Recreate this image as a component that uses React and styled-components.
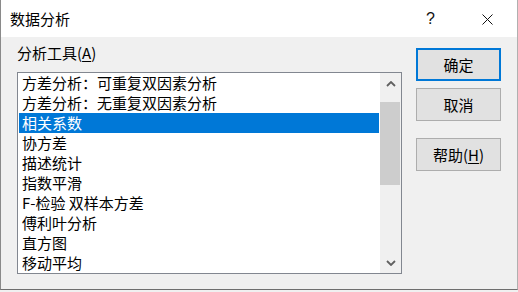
import React from 'react';
import styled, { createGlobalStyle } from 'styled-components';

const items = [
    '方差分析：可重复双因素分析',
    '方差分析：无重复双因素分析',
    '相关系数',
    '协方差',
    '描述统计',
    '指数平滑',
    'F-检验 双样本方差',
    '傅利叶分析',
    '直方图',
    '移动平均',
];

function DataAnalysis() {
    const selected = 2;

    return (
        <Window>
            <TitleBar>
                <Title>数据分析</Title>
                <CaptionButton>?</CaptionButton>
                <CaptionButton>
                    <svg width="11" height="11" viewBox="0 0 11 11">
                        <path d="M0.5 0.5 L10.5 10.5 M10.5 0.5 L0.5 10.5" stroke="#111" strokeWidth="1" fill="none" />
                    </svg>
                </CaptionButton>
            </TitleBar>
            <Body>
                <LeftColumn>
                    <Label>分析工具(<u>A</u>)</Label>
                    <ListBox>
                        <Rows>
                            {items.map((item, i) => (
                                <Row key={item} $selected={i === selected}>{item}</Row>
                            ))}
                        </Rows>
                        <ScrollBar>
                            <ArrowButton>
                                <svg width="10" height="6" viewBox="0 0 10 6">
                                    <path d="M1 5 L5 1 L9 5" stroke="#606060" strokeWidth="1.8" fill="none" />
                                </svg>
                            </ArrowButton>
                            <Track>
                                <Thumb />
                            </Track>
                            <ArrowButton>
                                <svg width="10" height="6" viewBox="0 0 10 6">
                                    <path d="M1 1 L5 5 L9 1" stroke="#606060" strokeWidth="1.8" fill="none" />
                                </svg>
                            </ArrowButton>
                        </ScrollBar>
                    </ListBox>
                </LeftColumn>
                <ButtonColumn>
                    <Button $default>确定</Button>
                    <Button>取消</Button>
                    <Button $spaced>帮助(<u>H</u>)</Button>
                </ButtonColumn>
            </Body>
        </Window>
    );
}

const GlobalStyle = createGlobalStyle`
    html, body {
        margin: 0;
        padding: 0;
        background: #f0f0f0;
    }
    body {
        font-family: "Noto Sans CJK SC", "Noto Sans", sans-serif;
        font-size: 15px;
        color: #000;
    }
    u {
        text-decoration-thickness: 1px;
        text-underline-offset: 2px;
    }
`;

const Window = styled.div`
    width: 518px;
    height: 290px;
    box-sizing: border-box;
    border-left: 1px solid #8a8a8a;
    border-right: 1px solid #b0b0b0;
    border-bottom: 1px solid #6e6e6e;
    background: #f0f0f0;
    display: flex;
    flex-direction: column;
`;

const TitleBar = styled.div`
    height: 37px;
    background: #fff;
    display: flex;
    align-items: center;
    padding-left: 9px;
    padding-right: 1px;
`;

const Title = styled.div`
    flex: 1;
    line-height: 20px;
    margin-top: 1px;
`;

const CaptionButton = styled.div`
    width: 57px;
    height: 37px;
    display: flex;
    align-items: center;
    justify-content: center;
    font-family: "Liberation Sans", sans-serif;
    font-size: 16px;
    color: #111;
    margin-top: 1px;
`;

const Body = styled.div`
    flex: 1;
    display: flex;
    align-items: flex-start;
    padding: 8px 0 0 16px;
    gap: 14px;
`;

const LeftColumn = styled.div`
    display: flex;
    flex-direction: column;
`;

const Label = styled.div`
    line-height: 16px;
    height: 16px;
    margin-bottom: 11px;
`;

const ListBox = styled.div`
    width: 385px;
    height: 202px;
    box-sizing: border-box;
    border: 1px solid #828790;
    background: #fff;
    display: flex;
`;

const Rows = styled.div`
    flex: 1;
    display: flex;
    flex-direction: column;
    padding: 0 1px;
`;

const Row = styled.div`
    height: 20px;
    line-height: 20px;
    padding-left: 3px;
    white-space: nowrap;
    background: ${p => (p.$selected ? '#0078d7' : 'transparent')};
    color: ${p => (p.$selected ? '#fff' : '#000')};
`;

const ScrollBar = styled.div`
    width: 21px;
    display: flex;
    flex-direction: column;
    background: #f0f0f0;
`;

const ArrowButton = styled.div`
    height: 21px;
    display: flex;
    align-items: center;
    justify-content: center;
`;

const Track = styled.div`
    flex: 1;
    padding-top: 8px;
`;

const Thumb = styled.div`
    height: 83px;
    margin: 0 1px 0 0;
    background: #cdcdcd;
`;

const ButtonColumn = styled.div`
    display: flex;
    flex-direction: column;
    gap: 7px;
    margin-top: 3px;
`;

const Button = styled.div`
    width: 85px;
    height: 33px;
    box-sizing: border-box;
    display: flex;
    align-items: center;
    justify-content: center;
    background: #e1e1e1;
    border: ${p => (p.$default ? '2px solid #0078d7' : '1px solid #adadad')};
    margin-top: ${p => (p.$spaced ? '10px' : '0')};
    line-height: 20px;
`;

export default function App() {
    return (
        <>
            <GlobalStyle />
            <DataAnalysis />
        </>
    );
}
